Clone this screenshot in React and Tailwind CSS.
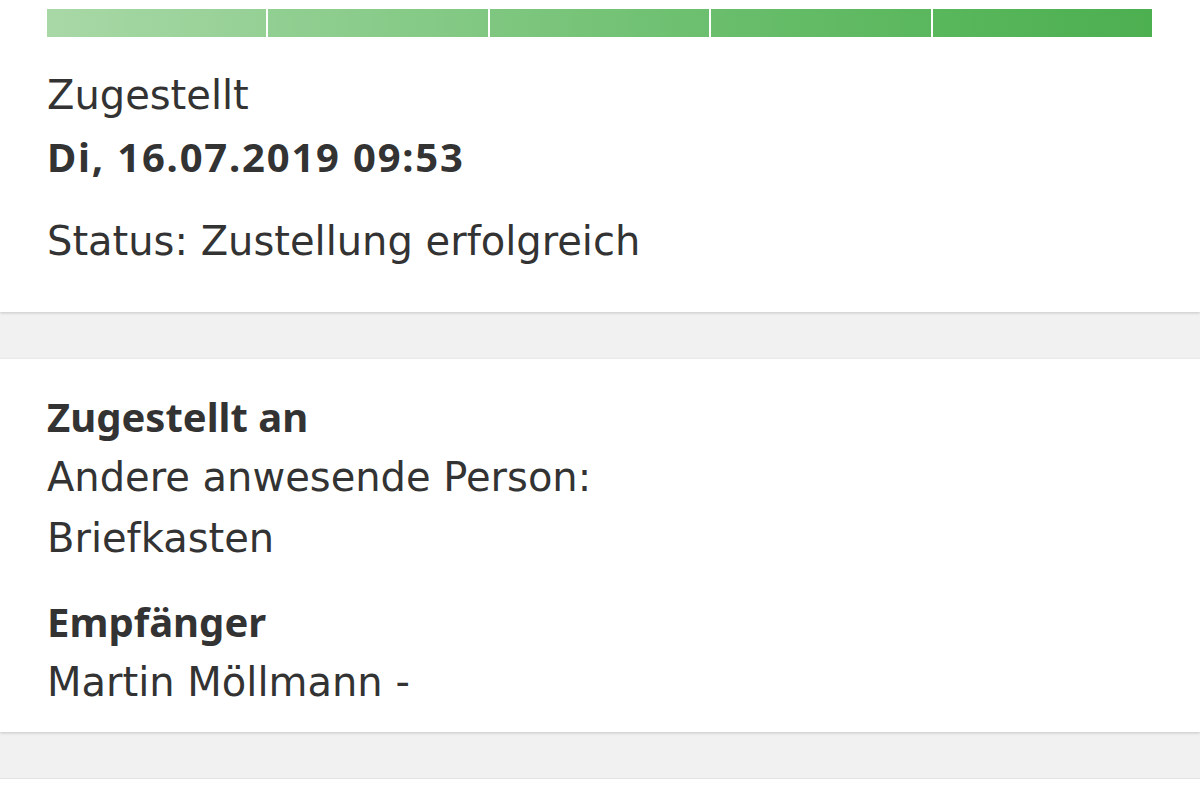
import React from 'react';

const segments = [
  'from-[#a8d8a6] to-[#95d095]',
  'from-[#92cf92] to-[#80c882]',
  'from-[#7fc780] to-[#6bbf6e]',
  'from-[#6abe6c] to-[#5ab75d]',
  'from-[#59b75c] to-[#4caf50]',
];

const bold = "font-['Noto_Sans',sans-serif] font-bold";

export default function App() {
  return (
    <div className="min-h-[798px] bg-white text-[#333333] font-['DejaVu_Sans',sans-serif]">
      <div className="bg-white px-[47px] pt-[9px] pb-[40px] shadow-[0_1px_3px_rgba(0,0,0,0.18)] relative">
        <div className="flex gap-[2px] w-[1105px]">
          {segments.map((s, i) => (
            <div key={i} className={`flex-1 h-[28px] bg-gradient-to-r ${s}`} />
          ))}
        </div>
        <div className="mt-[28px] text-[40px] leading-[61px]">
          <p>Zugestellt</p>
          <p className={`${bold} tracking-[1.8px]`}>Di, 16.07.2019 09:53</p>
          <p className="mt-[24px]">Status: Zustellung erfolgreich</p>
        </div>
      </div>

      <div className="h-[47px] bg-[#f1f1f1]" />

      <div className="bg-white px-[47px] pt-[27px] pb-[19px] text-[40px] leading-[61px] shadow-[0_1px_3px_rgba(0,0,0,0.18)] relative">
        <p className={bold}>Zugestellt an</p>
        <p>Andere anwesende Person:</p>
        <p>Briefkasten</p>
        <p className={`${bold} mt-[22px]`}>Empfänger</p>
        <p>Martin Möllmann -</p>
      </div>

      <div className="h-[47px] bg-[#f1f1f1] border-b border-[#e4e4e4]" />
    </div>
  );
}
